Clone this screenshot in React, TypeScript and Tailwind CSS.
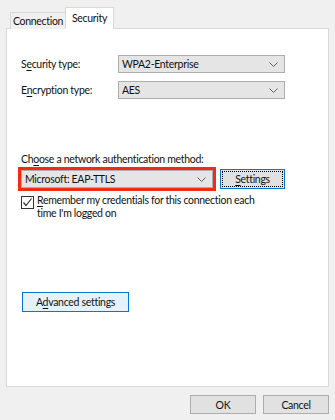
import React from 'react';

const Chevron = () => (
  <svg width="9" height="5" viewBox="0 0 9 5" className="shrink-0">
    <polyline points="0.5,0.5 4.5,4.5 8.5,0.5" fill="none" stroke="#606060" strokeWidth="1" />
  </svg>
);

function Dropdown({ value, className = '' }: { value: string; className?: string }) {
  return (
    <div
      className={`h-[18px] bg-[#e5e5e5] border border-[#adadad] flex items-center justify-between pl-[3px] pr-[6px] ${className}`}
    >
      <span>{value}</span>
      <Chevron />
    </div>
  );
}

const U = ({ children }: { children: React.ReactNode }) => <span className="underline underline-offset-2">{children}</span>;

export default function App() {
  return (
    <div
      className="w-[335px] h-[420px] bg-[#f0f0f0] flex flex-col text-[10.5px] tracking-[-0.3px] text-[#111] leading-[14px]"
      style={{ fontFamily: 'Lato, "Noto Sans", sans-serif' }}
    >
      {/* Tabs */}
      <div className="flex items-end pl-[10px] pt-[7px] h-[29px] -mb-px relative z-10">
        <div className="h-[17px] w-[55px] border border-b-0 border-r-0 border-[#d9d9d9] bg-[#f0f0f0] flex items-center justify-center">
          Connection
        </div>
        <div className="h-[22px] w-[49px] border border-b-0 border-[#d9d9d9] bg-white flex items-start justify-center pt-[3px]">
          Security
        </div>
      </div>

      {/* Panel */}
      <div className="ml-[6px] w-[323px] h-[359px] border border-[#d9d9d9] bg-white pl-[14px] pt-[26px] flex flex-col">
        <div className="flex items-center">
          <span className="w-[97px]">S<U>e</U>curity type:</span>
          <Dropdown value="WPA2-Enterprise" className="w-[167px]" />
        </div>
        <div className="flex items-center mt-[8px]">
          <span className="w-[97px]">E<U>n</U>cryption type:</span>
          <Dropdown value="AES" className="w-[167px]" />
        </div>

        <div className="mt-[53px]">
          Ch<U>o</U>ose a network authentication method:
        </div>
        <div className="flex items-center mt-[1px] -ml-[3px]">
          <div className="border-[3px] border-[#f02c12]">
            <Dropdown value="Microsoft: EAP-TTLS" className="w-[192px]" />
          </div>
          <button className="ml-[4px] w-[65px] h-[20px] border border-[#0078d7] bg-[#e1e1e1] p-[1px]">
            <div className="w-full h-full border border-dotted border-black flex items-center justify-center">
              <span><U>S</U>ettings</span>
            </div>
          </button>
        </div>

        <div className="flex items-start mt-[4px]">
          <div className="w-[13px] h-[13px] border border-[#333] bg-white flex items-center justify-center mt-[1px] shrink-0">
            <svg width="11" height="11" viewBox="0 0 11 11">
              <polyline points="1.5,5.5 4,8.5 9.5,1.5" fill="none" stroke="#333" strokeWidth="1.2" />
            </svg>
          </div>
          <div className="ml-[3px] leading-[13px] -mt-[1px]">
            <U>R</U>emember my credentials for this connection each
            <br />
            time I'm logged on
          </div>
        </div>

        <button className="mt-[72px] ml-[1px] w-[107px] h-[20px] border border-[#0078d7] bg-[#e5f1fb] flex items-center justify-center">
          <span>A<U>d</U>vanced settings</span>
        </button>
      </div>

      {/* Footer buttons */}
      <div className="flex justify-end gap-[7px] pr-[6px] mt-[8px]">
        <button className="w-[66px] h-[19px] border border-[#adadad] bg-[#e1e1e1] flex items-center justify-center">OK</button>
        <button className="w-[66px] h-[19px] border border-[#adadad] bg-[#e1e1e1] flex items-center justify-center">Cancel</button>
      </div>
    </div>
  );
}
